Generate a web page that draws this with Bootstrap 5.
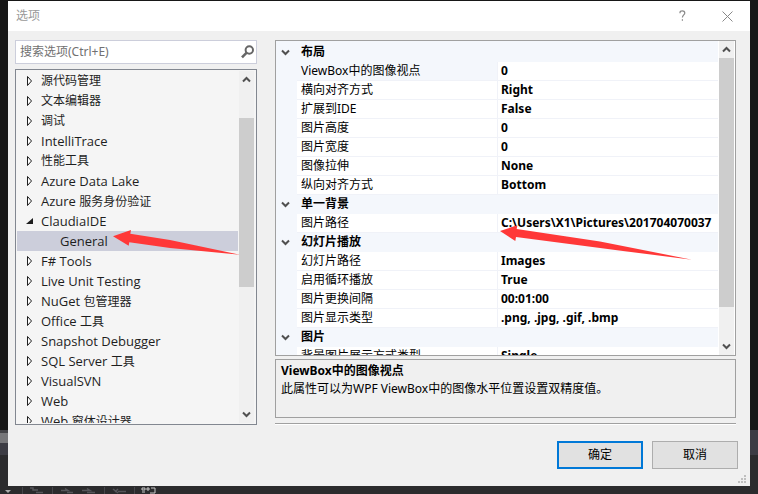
<!DOCTYPE html>
<html lang="zh-CN">
<head>
<meta charset="utf-8">
<meta name="viewport" content="width=device-width, initial-scale=1">
<title>选项</title>
<link rel="stylesheet" href="https://cdn.jsdelivr.net/npm/bootstrap@5.3.0/dist/css/bootstrap.min.css">
<style>
body{font-family:"Noto Sans","Noto Sans CJK SC",sans-serif;font-size:12px;line-height:18px;color:#000;background:#2b2b2d}
.backdrop{background:linear-gradient(#171717 0 430px,#444448 430px 433px,#77777a 433px 443px,#3c3c44 443px 455px,#2b2b2d 455px) left/8px 100% no-repeat,linear-gradient(#171717 0 430px,#3c3c44 430px 455px,#2b2b2d 455px);overflow:hidden}
.dialog-box{margin:1px 8px 0;background:#f0f0f0}
.title-bar{height:30px;color:#999;padding-left:8px;background:#fff}
.title-bar h1{font-size:12px}
.title-btn{width:45px;height:30px;border:0;background:none;padding:0;line-height:0}
.work{padding:9px 14px 0 7px;gap:18px}
.left-pane{width:242px;gap:5px}
.search{height:24px;border:1px solid #cccedb;background:#fff}
.search input{font-family:"Noto Sans","Noto Sans CJK SC",sans-serif;font-size:12px;line-height:18px;color:#717171;padding:0 4px;border:0;outline:0;min-width:0;background:none}
.search input::placeholder{color:#717171;opacity:1}
.search button,.tree button,.bar button{border:0;background:none;padding:0;line-height:0}
.tree{height:356px;border:1px solid #828790;background:#f5f5f5;padding:1px}
.tree li{height:20px;line-height:20px;padding-left:9px;color:#1e1e1e;gap:8px;white-space:nowrap}
.tree li.picked{background:#cccedb;padding-left:43px;margin-right:1px}
.lat{font-family:"Open Sans",sans-serif;font-size:13px}
.bar{width:15px;margin-right:1px;background:#f0f0f0}
.bar button{height:17px}
.thumb{background:#cdcdcd}
.tree-top{height:30px}
.tree-thumb{height:169px}
.props-thumb{height:249px}
.props-box{height:316px;border:1px solid #a0a0a0;background:#fff}
.props{table-layout:fixed;border-collapse:separate;border-spacing:0}
.gut-col{width:21px}
.name-col{width:200px}
.props td,.props th{height:19px;padding:0 0 0 4px;line-height:18px;border-bottom:1px solid #f0f2f8;white-space:nowrap;overflow:hidden;font-weight:400}
.props .gut{background:#f4f7fc;border-color:#f4f7fc;padding:0 0 0 5px;line-height:0}
.props .gut svg{display:block}
.props .cat{background:#f4f7fc;font-weight:700;border-color:#f4f7fc}
.props .sel{background:#f4f7fc}
.props .val{font-weight:700;border-left:1px solid #f0f2f8;padding-left:3px}
.grid-pad{padding-top:2px;margin-right:1px;background:#f4f7fc}
.props tbody{background:#fff}
.help-box{height:59px;border:1px solid #a0a0a0;margin-top:3px;padding:2px 5px}
.rule{margin-top:5px;border-top:1px solid #a0a0a0;border-bottom:1px solid #fff}
.actions{padding:16px 12px 17px;gap:9px}
.actions .btn{width:86px;height:28px;font-size:12px;line-height:18px;padding:0;border-radius:0;background:#e1e1e1;border:1px solid #adadad;color:#000}
.actions .btn.go{border:2px solid #0078d7}
.grip{right:3px;bottom:2px}
.pointer{left:0;top:0;pointer-events:none}
.toolstrip{margin-top:1px}
</style>
<script src="https://cdn.jsdelivr.net/npm/bootstrap@5.3.0/dist/js/bootstrap.bundle.min.js"></script>
</head>
<body>
<svg width="0" height="0" class="position-absolute" aria-hidden="true">
<defs>
<symbol id="closed" viewBox="0 0 7 12"><path d="M1.5 1.5v9L5.5 6z" fill="#fff" stroke="#1e1e1e"/></symbol>
<symbol id="open" viewBox="0 0 7 12"><path d="M7 3v6H0z" fill="#1e1e1e"/></symbol>
<symbol id="up" viewBox="0 0 9 7"><path d="M1 5.5 4.5 2 8 5.5" fill="none" stroke="#505050" stroke-width="2"/></symbol>
<symbol id="down" viewBox="0 0 9 7"><path d="M1 1.5 4.5 5 8 1.5" fill="none" stroke="#505050" stroke-width="2"/></symbol>
</defs>
</svg>
<div class="backdrop vh-100">
<main class="dialog-box position-relative">
<header class="title-bar d-flex align-items-center">
<h1 class="m-0 fw-normal me-auto">选项</h1>
<button class="title-btn" aria-label="帮助"><svg width="9" height="12" viewBox="0 0 9 12"><path d="M2 3.2V2.6C2 1.5 3 .8 4.3.8S6.8 1.5 6.8 2.9C6.8 4.9 4.4 5 4.4 7.6M4.4 9.2v1.6" fill="none" stroke="#888" stroke-width="1.2"/></svg></button>
<button class="title-btn" aria-label="关闭"><svg width="11" height="11" viewBox="0 0 11 11"><path d="M.5.5l10 10M10.5.5l-10 10" stroke="#888" fill="none"/></svg></button>
</header>
<div class="work d-flex">
<section class="left-pane d-flex flex-column flex-shrink-0 position-relative">
<div class="search d-flex align-items-center">
<input class="flex-grow-1" type="text" aria-label="搜索选项" placeholder="搜索选项(Ctrl+E)">
<button aria-label="搜索"><svg width="16" height="16" viewBox="0 0 16 16"><circle cx="9.3" cy="6" r="3.7" fill="none" stroke="#666" stroke-width="2"/><path d="M6.7 8.7 2 13.4" stroke="#666" stroke-width="2.6"/></svg></button>
</div>
<div class="tree d-flex">
<ul class="list-unstyled m-0 flex-grow-1 overflow-hidden">
<li class="d-flex align-items-center"><button aria-label="展开"><svg width="7" height="12"><use href="#closed"/></svg></button><span>源代码管理</span></li>
<li class="d-flex align-items-center"><button aria-label="展开"><svg width="7" height="12"><use href="#closed"/></svg></button><span>文本编辑器</span></li>
<li class="d-flex align-items-center"><button aria-label="展开"><svg width="7" height="12"><use href="#closed"/></svg></button><span>调试</span></li>
<li class="d-flex align-items-center"><button aria-label="展开"><svg width="7" height="12"><use href="#closed"/></svg></button><span class="lat">IntelliTrace</span></li>
<li class="d-flex align-items-center"><button aria-label="展开"><svg width="7" height="12"><use href="#closed"/></svg></button><span>性能工具</span></li>
<li class="d-flex align-items-center"><button aria-label="展开"><svg width="7" height="12"><use href="#closed"/></svg></button><span class="lat">Azure Data Lake</span></li>
<li class="d-flex align-items-center"><button aria-label="展开"><svg width="7" height="12"><use href="#closed"/></svg></button><span><span class="lat">Azure </span>服务身份验证</span></li>
<li class="d-flex align-items-center"><button aria-label="折叠"><svg width="7" height="12"><use href="#open"/></svg></button><span class="lat">ClaudiaIDE</span></li>
<li class="d-flex align-items-center picked"><span class="lat">General</span></li>
<li class="d-flex align-items-center"><button aria-label="展开"><svg width="7" height="12"><use href="#closed"/></svg></button><span class="lat">F# Tools</span></li>
<li class="d-flex align-items-center"><button aria-label="展开"><svg width="7" height="12"><use href="#closed"/></svg></button><span class="lat">Live Unit Testing</span></li>
<li class="d-flex align-items-center"><button aria-label="展开"><svg width="7" height="12"><use href="#closed"/></svg></button><span><span class="lat">NuGet </span>包管理器</span></li>
<li class="d-flex align-items-center"><button aria-label="展开"><svg width="7" height="12"><use href="#closed"/></svg></button><span><span class="lat">Office </span>工具</span></li>
<li class="d-flex align-items-center"><button aria-label="展开"><svg width="7" height="12"><use href="#closed"/></svg></button><span class="lat">Snapshot Debugger</span></li>
<li class="d-flex align-items-center"><button aria-label="展开"><svg width="7" height="12"><use href="#closed"/></svg></button><span><span class="lat">SQL Server </span>工具</span></li>
<li class="d-flex align-items-center"><button aria-label="展开"><svg width="7" height="12"><use href="#closed"/></svg></button><span class="lat">VisualSVN</span></li>
<li class="d-flex align-items-center"><button aria-label="展开"><svg width="7" height="12"><use href="#closed"/></svg></button><span class="lat">Web</span></li>
<li class="d-flex align-items-center"><button aria-label="展开"><svg width="7" height="12"><use href="#closed"/></svg></button><span><span class="lat">Web </span>窗体设计器</span></li>
</ul>
<div class="bar d-flex flex-column flex-shrink-0">
<button aria-label="向上滚动"><svg width="9" height="7"><use href="#up"/></svg></button>
<div class="tree-top"></div>
<div class="thumb tree-thumb"></div>
<button class="mt-auto" aria-label="向下滚动"><svg width="9" height="7"><use href="#down"/></svg></button>
</div>
</div>
<svg class="pointer position-absolute" width="242" height="240" viewBox="15 40 242 240" aria-hidden="true"><path d="M113 236.300 131 230 130.300 233.700 170 240 240 254.700 170 248 129.300 242.300 128.700 245.700z" fill="#ff3838"/></svg>
</section>
<section class="flex-grow-1 position-relative overflow-hidden">
<div class="props-box d-flex">
<div class="grid-pad flex-grow-1 overflow-hidden">
<table class="props w-100">
<colgroup><col class="gut-col"><col class="name-col"><col></colgroup>
<tbody>
<tr><td class="gut"><svg width="9" height="7"><use href="#down"/></svg></td><th class="cat" colspan="2">布局</th></tr>
<tr><td class="gut"></td><th class="sel" scope="row">ViewBox中的图像视点</th><td class="val">0</td></tr>
<tr><td class="gut"></td><th scope="row">横向对齐方式</th><td class="val">Right</td></tr>
<tr><td class="gut"></td><th scope="row">扩展到IDE</th><td class="val">False</td></tr>
<tr><td class="gut"></td><th scope="row">图片高度</th><td class="val">0</td></tr>
<tr><td class="gut"></td><th scope="row">图片宽度</th><td class="val">0</td></tr>
<tr><td class="gut"></td><th scope="row">图像拉伸</th><td class="val">None</td></tr>
<tr><td class="gut"></td><th scope="row">纵向对齐方式</th><td class="val">Bottom</td></tr>
<tr><td class="gut"><svg width="9" height="7"><use href="#down"/></svg></td><th class="cat" colspan="2">单一背景</th></tr>
<tr><td class="gut"></td><th scope="row">图片路径</th><td class="val">C:\Users\X1\Pictures\201704070037</td></tr>
<tr><td class="gut"><svg width="9" height="7"><use href="#down"/></svg></td><th class="cat" colspan="2">幻灯片播放</th></tr>
<tr><td class="gut"></td><th scope="row">幻灯片路径</th><td class="val">Images</td></tr>
<tr><td class="gut"></td><th scope="row">启用循环播放</th><td class="val">True</td></tr>
<tr><td class="gut"></td><th scope="row">图片更换间隔</th><td class="val">00:01:00</td></tr>
<tr><td class="gut"></td><th scope="row">图片显示类型</th><td class="val">.png, .jpg, .gif, .bmp</td></tr>
<tr><td class="gut"><svg width="9" height="7"><use href="#down"/></svg></td><th class="cat" colspan="2">图片</th></tr>
<tr><td class="gut"></td><th scope="row">背景图片展示方式类型</th><td class="val">Single</td></tr>
</tbody>
</table>
</div>
<div class="bar d-flex flex-column flex-shrink-0">
<button aria-label="向上滚动"><svg width="9" height="7"><use href="#up"/></svg></button>
<div class="thumb props-thumb"></div>
<button class="mt-auto" aria-label="向下滚动"><svg width="9" height="7"><use href="#down"/></svg></button>
</div>
</div>
<div class="help-box">
<div class="fw-bold">ViewBox中的图像视点</div>
<div>此属性可以为WPF ViewBox中的图像水平位置设置双精度值。</div>
</div>
<div class="rule"></div>
<svg class="pointer position-absolute" width="440" height="240" viewBox="275 40 440 240" aria-hidden="true"><path d="M500 231 517.300 225.300 516.700 229 600 241.500 692 259.700 623 251 516 237 515.300 241z" fill="#ff3838"/></svg>
</section>
</div>
<footer class="actions d-flex justify-content-end">
<button class="btn go">确定</button>
<button class="btn">取消</button>
</footer>
<svg class="grip position-absolute" width="9" height="9" viewBox="0 0 9 9" aria-hidden="true"><path d="M6 0h2v2H6zM3 3h2v2H3zM6 3h2v2H6zM0 6h2v2H0zM3 6h2v2H3zM6 6h2v2H6z" fill="#bfbfbf"/></svg>
</main>
<svg class="toolstrip d-block" width="180" height="7" viewBox="0 487 180 7" aria-hidden="true"><path d="M5 490h6l-3 3z" fill="#aaa"/><path d="M22.500 487v7M52.500 487v7M104.500 487v7M134.500 487v7" stroke="#46464a"/><path d="M30 488h3v2h5M36 492.500h7M61 490.500h7l-3-2M67 492.500h6M82 490.500h8l-3-2M87 492.500h8M113 489l5 4M118 489l-3 3M118 491.500h8" stroke="#55555a" stroke-width="1.500" fill="none"/><path d="M142 488h3v2h-3zM147 488h2v2h-2zM142 492h3M151 488h4v5h-5" stroke="#c8c8c8" fill="none"/></svg>
</div>
</body>
</html>
